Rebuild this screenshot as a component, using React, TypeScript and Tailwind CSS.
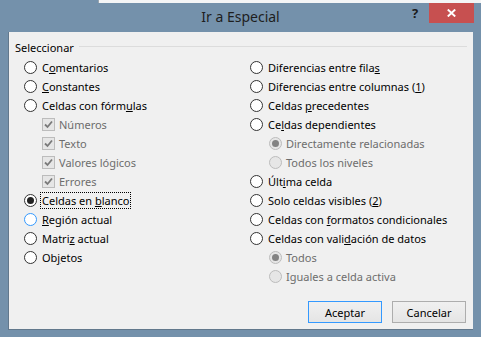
import React from "react";

type RState = "normal" | "checked" | "hover" | "disabled" | "disabledChecked";

function Radio({ state }: { state: RState }) {
  const border =
    state === "hover"
      ? "border-[#3399ff]"
      : state === "disabled" || state === "disabledChecked"
      ? "border-[#bcbcbc]"
      : "border-[#333333]";
  const bg = state === "disabled" || state === "disabledChecked" ? "bg-[#e6e6e6]" : "bg-white";
  return (
    <span
      className={`w-[13px] h-[13px] rounded-full border ${border} ${bg} flex items-center justify-center shrink-0`}
    >
      {state === "checked" && <span className="w-[7px] h-[7px] rounded-full bg-[#222222]" />}
      {state === "disabledChecked" && <span className="w-[7px] h-[7px] rounded-full bg-[#838383]" />}
    </span>
  );
}

function Check() {
  return (
    <span className="w-[13px] h-[13px] border border-[#bcbcbc] bg-[#e6e6e6] flex items-center justify-center shrink-0">
      <svg width="11" height="11" viewBox="0 0 11 11">
        <path d="M2 5.5 L4.5 8 L9 2.5" fill="none" stroke="#7a7a7a" strokeWidth="1.8" />
      </svg>
    </span>
  );
}

function Label({ parts, disabled }: { parts: string[] | string; disabled?: boolean }) {
  if (typeof parts === "string") {
    return <span className={disabled ? "text-[#6d6d6d]" : "text-black"}>{parts}</span>;
  }
  return (
    <span className="text-black whitespace-pre">
      {parts[0]}
      <span className="underline">{parts[1]}</span>
      {parts[2]}
    </span>
  );
}

type Item = {
  kind: "radio" | "check";
  state?: RState;
  indent?: boolean;
  focus?: boolean;
  label: string[] | string;
};

const left: Item[] = [
  { kind: "radio", label: ["C", "o", "mentarios"] },
  { kind: "radio", label: ["", "C", "onstantes"] },
  { kind: "radio", label: ["Celdas con fórm", "u", "las"] },
  { kind: "check", indent: true, label: "Números" },
  { kind: "check", indent: true, label: "Texto" },
  { kind: "check", indent: true, label: "Valores lógicos" },
  { kind: "check", indent: true, label: "Errores" },
  { kind: "radio", state: "checked", focus: true, label: ["Celdas en ", "b", "lanco"] },
  { kind: "radio", state: "hover", label: ["", "R", "egión actual"] },
  { kind: "radio", label: ["Matri", "z", " actual"] },
  { kind: "radio", label: ["Ob", "j", "etos"] },
];

const right: Item[] = [
  { kind: "radio", label: ["Diferencias entre fila", "s", ""] },
  { kind: "radio", label: ["Diferencias entre columnas (", "1", ")"] },
  { kind: "radio", label: ["Celdas ", "p", "recedentes"] },
  { kind: "radio", label: ["Ce", "l", "das dependientes"] },
  { kind: "radio", indent: true, state: "disabledChecked", label: "Directamente relacionadas" },
  { kind: "radio", indent: true, state: "disabled", label: "Todos los niveles" },
  { kind: "radio", label: ["Últ", "i", "ma celda"] },
  { kind: "radio", label: ["Solo celdas visibles (", "2", ")"] },
  { kind: "radio", label: ["Celdas con ", "f", "ormatos condicionales"] },
  { kind: "radio", label: ["Celdas con vali", "d", "ación de datos"] },
  { kind: "radio", indent: true, state: "disabledChecked", label: "Todos" },
  { kind: "radio", indent: true, state: "disabled", label: "Iguales a celda activa" },
];

function Row({ item, subIndent }: { item: Item; subIndent: string }) {
  const disabled = item.kind === "check" || item.state === "disabled" || item.state === "disabledChecked";
  return (
    <div className={`h-[19px] flex items-center ${item.indent ? subIndent : ""}`}>
      {item.kind === "radio" ? <Radio state={item.state ?? "normal"} /> : <Check />}
      <span className={item.kind === "check" ? "ml-[4px]" : item.indent ? "ml-[4px]" : "ml-[5px]"}>
        {item.focus ? (
          <span className="border border-dotted border-black px-[1px] -mx-[2px] py-0">
            <Label parts={item.label} disabled={disabled} />
          </span>
        ) : (
          <Label parts={item.label} disabled={disabled} />
        )}
      </span>
    </div>
  );
}

export default function App() {
  return (
    <div className="w-[481px] h-[337px] bg-[#7491ab] flex flex-col overflow-hidden font-['Noto_Sans',sans-serif] text-[11px] leading-none select-none">
      {/* background strip above window */}
      <div className="h-[3px] flex shrink-0">
        <div className="w-[98px] bg-[#7491ab]" />
        <div className="flex-1 bg-[#f4f5f6] border-l border-[#9aa4ad]" />
      </div>
      {/* title bar */}
      <div className="h-[29px] grid grid-cols-[1fr_auto_1fr] shrink-0">
        <div />
        <div className="flex items-center pb-[2px] text-[14px] text-[#1e1e1e]">Ir a Especial</div>
        <div className="flex justify-end items-start pr-[7px]">
          <div className="w-[28px] h-[20px] flex items-center justify-center text-[13px] font-bold text-[#1a1a1a]">
            ?
          </div>
          <div className="w-[45px] h-[20px] bg-[#c75050] flex items-center justify-center">
            <svg width="9" height="8" viewBox="0 0 9 8">
              <path d="M0.8 0.5 L8.2 7.5 M8.2 0.5 L0.8 7.5" stroke="white" strokeWidth="1.9" />
            </svg>
          </div>
        </div>
      </div>
      {/* body */}
      <div className="flex h-[298px] shrink-0">
        <div className="w-[8px]" />
        <div className="w-[465px] bg-[#f0f0f0] border-l border-b border-[#62788c] flex flex-col">
          <div className="h-[20px] mt-[5px] flex items-center pl-[6px] pr-[6px]">
            <span className="text-black">Seleccionar</span>
            <div className="flex-1 h-px bg-[#dcdcdc] ml-[5px] mb-[2px]" />
          </div>
          <div className="grid grid-cols-[226px_1fr] pl-[15px] mt-[1px]">
            <div className="flex flex-col">
              {left.map((it, i) => (
                <Row key={i} item={it} subIndent="pl-[18px]" />
              ))}
            </div>
            <div className="flex flex-col">
              {right.map((it, i) => (
                <Row key={i} item={it} subIndent="pl-[19px]" />
              ))}
            </div>
          </div>
          <div className="mt-auto flex justify-end gap-[10px] pr-[7px] pb-[6px]">
            <button className="w-[74px] h-[22px] border border-[#3399ff] bg-linear-to-b from-[#f0f0f0] to-[#e5e5e5] text-black text-[11px] flex items-center justify-center">
              Aceptar
            </button>
            <button className="w-[74px] h-[22px] border border-[#adadad] bg-linear-to-b from-[#f0f0f0] to-[#e5e5e5] text-black text-[11px] flex items-center justify-center">
              Cancelar
            </button>
          </div>
        </div>
        <div className="flex-1" />
      </div>
      <div className="flex-1" />
    </div>
  );
}
